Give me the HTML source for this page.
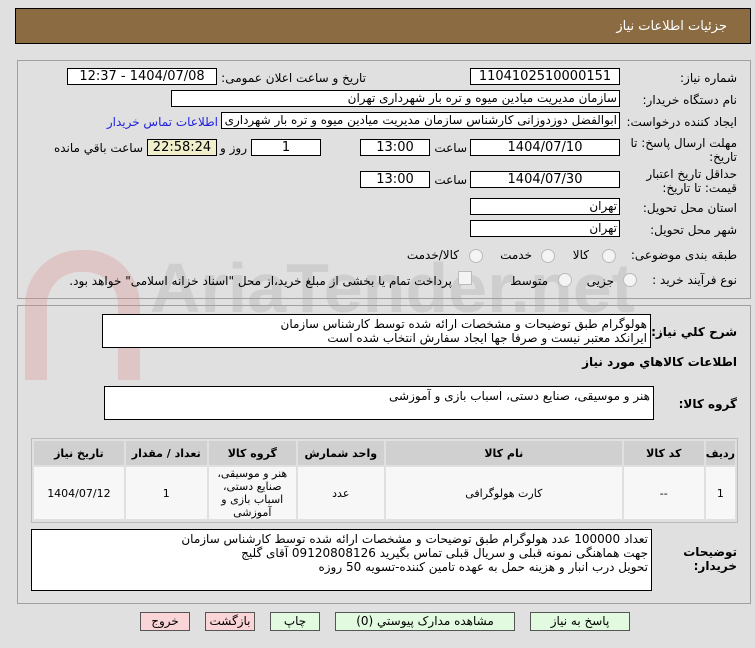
<!DOCTYPE html>
<html><head><meta charset="utf-8"><style>
body{margin:0;width:755px;height:648px;background:#e0e0e0;font-family:"DejaVu Sans","Liberation Sans",sans-serif;font-size:12px;color:#000;position:relative;overflow:hidden}
.a{position:absolute}
.hdr{left:15px;top:8px;width:736px;height:36px;background:#8b6b42;border:1px solid #000;box-sizing:border-box}
.panel{border:1px solid #a0a0a0;box-sizing:border-box}
.l{position:absolute;direction:rtl;text-align:right;white-space:nowrap;font-size:12px;line-height:14px}
.in{position:absolute;background:#fff;border:1px solid #000;box-sizing:border-box;height:17px;line-height:15px;text-align:center;white-space:nowrap;font-size:13px;direction:rtl;overflow:hidden}
.in.r{text-align:right;padding-right:2px;font-size:12px}
.ta{position:absolute;background:#fff;border:1px solid #000;box-sizing:border-box;direction:rtl;text-align:right;padding:2px 3px;font-size:12px;line-height:14px;white-space:nowrap;overflow:hidden}
.rad{position:absolute;width:12px;height:12px;border-radius:50%;border:1px solid #bbb;background:#f4f4f4}
table{border-collapse:separate;border-spacing:2px;direction:rtl}
td,th{text-align:center;font-size:11px;padding:0}
th{background:#d0d0d0;height:24px;font-weight:bold}
td{background:#f7f7f7;height:52px}
.btn{position:absolute;top:612px;height:19px;border:1px solid #555;box-sizing:border-box;text-align:center;line-height:17px;font-size:12px;direction:rtl}
.g{background:#e2fbe0}.p{background:#f9d5d8}
</style></head><body>
<div class="a hdr"></div>
<div class="l" style="right:28px;top:20px;color:#fff;font-size:13px">جزئیات اطلاعات نیاز</div>

<div class="a panel" style="left:17px;top:60px;width:734px;height:239px"></div>
<div class="a panel" style="left:17px;top:305px;width:734px;height:299px"></div>

<!-- watermark -->
<div class="a" style="left:25px;top:250px;width:115px;height:130px;border:22px solid rgba(220,140,140,.3);border-bottom:none;border-radius:55px 55px 0 0;box-sizing:border-box"></div>
<div class="l" style="left:150px;top:248px;font-size:70px;line-height:80px;font-weight:bold;color:rgba(160,160,160,.28);direction:ltr;font-family:'Liberation Sans',sans-serif">AriaTender.net</div>

<div class="l" style="right:18px;top:71px">شماره نیاز:</div>
<div class="in" style="left:470px;top:68px;width:150px">1104102510000151</div>
<div class="l" style="right:389px;top:71px">تاريخ و ساعت اعلان عمومی:</div>
<div class="in" style="left:67px;top:68px;width:150px">1404/07/08 - 12:37</div>

<div class="l" style="right:18px;top:93px">نام دستگاه خریدار:</div>
<div class="in r" style="left:171px;top:90px;width:449px">سازمان مديريت ميادين ميوه و تره بار شهرداری تهران</div>

<div class="l" style="right:18px;top:115px">ایجاد کننده درخواست:</div>
<div class="in r" style="left:221px;top:112px;width:399px">ابوالفضل دوزدوزانی کارشناس سازمان مديريت ميادين ميوه و تره بار شهرداری تهران</div>
<div class="l" style="right:537px;top:115px;color:#2020e0">اطلاعات تماس خریدار</div>

<div class="l" style="right:18px;top:136px">مهلت ارسال پاسخ: تا<br>تاریخ:</div>
<div class="in" style="left:470px;top:139px;width:150px">1404/07/10</div>
<div class="l" style="right:288px;top:141px">ساعت</div>
<div class="in" style="left:360px;top:139px;width:70px">13:00</div>
<div class="in" style="left:251px;top:139px;width:70px">1</div>
<div class="l" style="right:508px;top:141px">روز و</div>
<div class="in" style="left:147px;top:139px;width:70px;background:#f1efcb">22:58:24</div>
<div class="l" style="right:612px;top:141px">ساعت باقي مانده</div>

<div class="l" style="right:18px;top:167px">حداقل تاريخ اعتبار<br>قيمت: تا تاريخ:</div>
<div class="in" style="left:470px;top:171px;width:150px">1404/07/30</div>
<div class="l" style="right:288px;top:173px">ساعت</div>
<div class="in" style="left:360px;top:171px;width:70px">13:00</div>

<div class="l" style="right:18px;top:201px">استان محل تحویل:</div>
<div class="in r" style="left:470px;top:198px;width:150px">تهران</div>
<div class="l" style="right:18px;top:223px">شهر محل تحویل:</div>
<div class="in r" style="left:470px;top:220px;width:150px">تهران</div>

<div class="l" style="right:18px;top:248px">طبقه بندی موضوعی:</div>
<div class="rad" style="left:602px;top:249px"></div><div class="l" style="right:166px;top:248px">کالا</div>
<div class="rad" style="left:541px;top:249px"></div><div class="l" style="right:223px;top:248px">خدمت</div>
<div class="rad" style="left:469px;top:249px"></div><div class="l" style="right:296px;top:248px">کالا/خدمت</div>

<div class="l" style="right:18px;top:273px">نوع فرآیند خرید :</div>
<div class="rad" style="left:623px;top:273px"></div><div class="l" style="right:141px;top:274px">جزیی</div>
<div class="rad" style="left:558px;top:273px"></div><div class="l" style="right:207px;top:274px">متوسط</div>
<div class="a" style="left:458px;top:271px;width:12px;height:12px;border:1px solid #bbb;background:#f4f4f4"></div>
<div class="l" style="right:303px;top:274px">پرداخت تمام یا بخشی از مبلغ خرید،از محل "اسناد خزانه اسلامی" خواهد بود.</div>

<div class="l" style="right:18px;top:325px;font-weight:bold">شرح کلي نياز:</div>
<div class="ta" style="left:102px;top:314px;width:549px;height:34px">هولوگرام طبق توضیحات و مشخصات ارائه شده توسط کارشناس سازمان<br>ایرانکد معتبر نیست و صرفا جها ایجاد سفارش انتخاب شده است</div>
<div class="l" style="right:18px;top:355px;font-weight:bold">اطلاعات کالاهاي مورد نياز</div>
<div class="l" style="right:18px;top:397px;font-weight:bold">گروه کالا:</div>
<div class="ta" style="left:104px;top:386px;width:550px;height:34px">هنر و موسیقی، صنایع دستی، اسباب بازی و آموزشی</div>

<div class="a" style="left:31px;top:438px;width:707px;height:85px;border:1px solid #bbb;box-sizing:border-box">
<table style="width:705px;margin:0">
<tr><th style="width:26px">رديف</th><th style="width:80px">کد کالا</th><th style="width:236px">نام کالا</th><th style="width:86px">واحد شمارش</th><th style="width:87px">گروه کالا</th><th style="width:81px">تعداد / مقدار</th><th>تاريخ نياز</th></tr>
<tr><td>1</td><td>--</td><td>کارت هولوگرافی</td><td>عدد</td><td style="line-height:13px">هنر و موسیقی،<br>صنایع دستی،<br>اسباب بازی و<br>آموزشی</td><td>1</td><td>1404/07/12</td></tr>
</table></div>

<div class="l" style="right:18px;top:545px;font-weight:bold">توضیحات<br>خریدار:</div>
<div class="ta" style="left:31px;top:529px;width:621px;height:62px">تعداد 100000 عدد هولوگرام طبق توضیحات و مشخصات ارائه شده توسط کارشناس سازمان<br>جهت هماهنگی نمونه قبلی و سریال قبلی تماس بگیرید 09120808126 آقای گلیج<br>تحویل درب انبار  و هزینه حمل به عهده تامین کننده-تسویه 50 روزه</div>

<div class="btn g" style="left:530px;width:100px">پاسخ به نياز</div>
<div class="btn g" style="left:335px;width:180px">مشاهده مدارک پيوستي (0)</div>
<div class="btn g" style="left:270px;width:50px">چاپ</div>
<div class="btn p" style="left:205px;width:50px">بازگشت</div>
<div class="btn p" style="left:140px;width:50px">خروج</div>
</body></html>
